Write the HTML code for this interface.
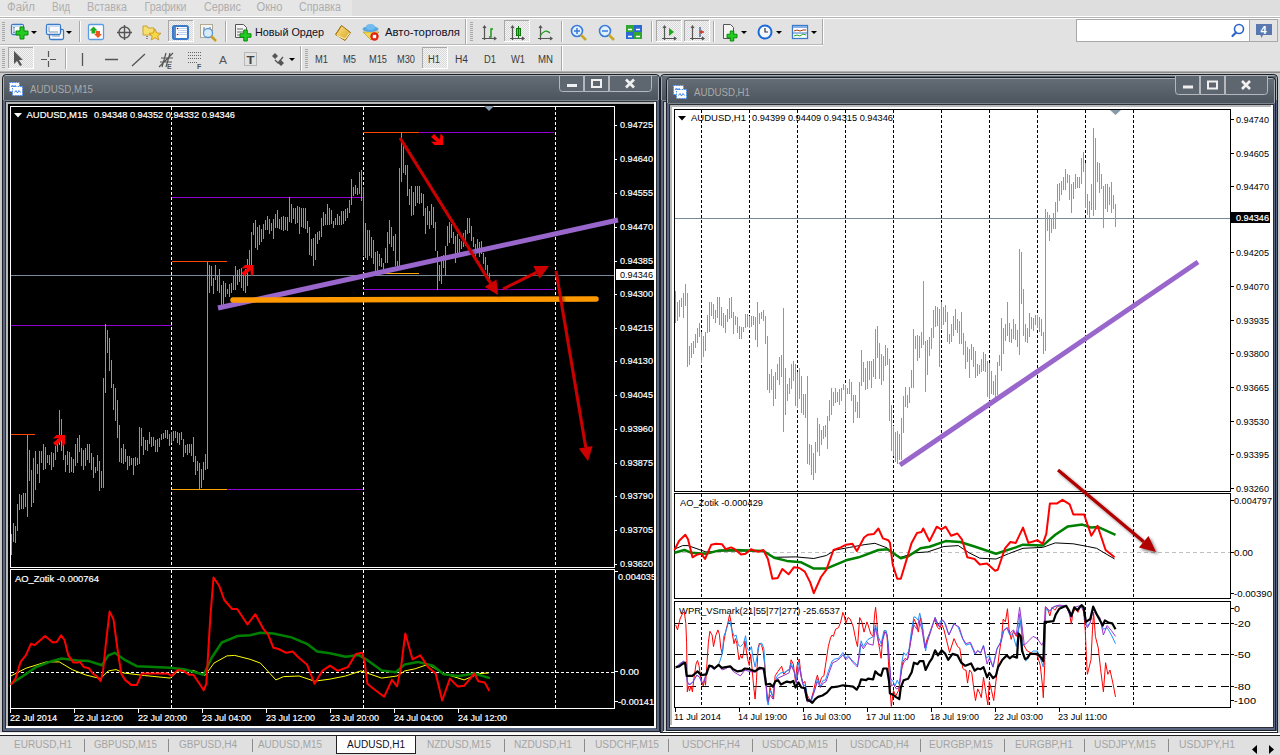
<!DOCTYPE html><html><head><meta charset="utf-8"><style>html,body{margin:0;padding:0;overflow:hidden;background:#e2e2e2} svg{display:block} text{font-family:"Liberation Sans", sans-serif}</style></head><body>
<svg width="1280" height="755" viewBox="0 0 1280 755">
<rect x="0" y="0" width="1280" height="755" fill="#c8c8c8" />
<rect x="0" y="0" width="1280" height="72" fill="#e2e2e2" />
<rect x="0" y="0" width="352" height="16" fill="#e6e6e6" />
<rect x="352" y="0" width="928" height="16" fill="#dedede" />
<text x="7" y="11" fill="#aeaeae" font-size="12" textLength="28" lengthAdjust="spacingAndGlyphs">Файл</text>
<text x="52" y="11" fill="#aeaeae" font-size="12" textLength="18" lengthAdjust="spacingAndGlyphs">Вид</text>
<text x="87" y="11" fill="#aeaeae" font-size="12" textLength="40" lengthAdjust="spacingAndGlyphs">Вставка</text>
<text x="144.5" y="11" fill="#aeaeae" font-size="12" textLength="42" lengthAdjust="spacingAndGlyphs">Графики</text>
<text x="204" y="11" fill="#aeaeae" font-size="12" textLength="37" lengthAdjust="spacingAndGlyphs">Сервис</text>
<text x="256.5" y="11" fill="#aeaeae" font-size="12" textLength="26" lengthAdjust="spacingAndGlyphs">Окно</text>
<text x="299" y="11" fill="#aeaeae" font-size="12" textLength="42" lengthAdjust="spacingAndGlyphs">Справка</text>
<rect x="0" y="16" width="1280" height="1" fill="#ffffff" />
<rect x="0" y="17" width="1280" height="1" fill="#b4b4b4" />
<rect x="0" y="18" width="1280" height="1" fill="#ffffff" />
<rect x="0" y="44" width="1280" height="1" fill="#b9b9b9" />
<rect x="0" y="45" width="1280" height="1" fill="#ffffff" />
<rect x="0" y="71" width="1280" height="1" fill="#b0b0b0" />
<rect x="0" y="72" width="1280" height="1" fill="#8a8a8a" />
<defs><pattern id="chk" width="2" height="2" patternUnits="userSpaceOnUse"><rect width="2" height="2" fill="#f4f4f4"/><rect width="1" height="1" fill="#d8d8d8"/><rect x="1" y="1" width="1" height="1" fill="#d8d8d8"/></pattern></defs>
<rect x="0" y="19" width="823" height="25" fill="#e2e2e2" />
<rect x="822" y="19" width="1" height="26" fill="#a8a8a8" />
<rect x="823" y="19" width="1" height="26" fill="#ffffff" />
<rect x="823" y="44" width="460" height="2" fill="#e2e2e2" />
<rect x="465" y="19" width="1" height="25" fill="#a8a8a8" />
<rect x="466" y="19" width="1" height="25" fill="#ffffff" />
<rect x="561" y="46" width="1" height="25" fill="#a8a8a8" />
<rect x="562" y="46" width="1" height="25" fill="#ffffff" />
<rect x="300" y="46" width="1" height="25" fill="#a8a8a8" />
<rect x="301" y="46" width="1" height="25" fill="#ffffff" />
<rect x="2" y="22" width="3" height="1" fill="#a8a8a8" />
<rect x="2" y="24" width="3" height="1" fill="#a8a8a8" />
<rect x="2" y="26" width="3" height="1" fill="#a8a8a8" />
<rect x="2" y="28" width="3" height="1" fill="#a8a8a8" />
<rect x="2" y="30" width="3" height="1" fill="#a8a8a8" />
<rect x="2" y="32" width="3" height="1" fill="#a8a8a8" />
<rect x="2" y="34" width="3" height="1" fill="#a8a8a8" />
<rect x="2" y="36" width="3" height="1" fill="#a8a8a8" />
<rect x="2" y="38" width="3" height="1" fill="#a8a8a8" />
<rect x="2" y="40" width="3" height="1" fill="#a8a8a8" />
<rect x="11.5" y="24.5" width="12" height="10" rx="1.5" fill="#fafafa" stroke="#3a7ac8" stroke-width="1.3"/>
<rect x="12" y="25" width="11" height="2" fill="#c8dcf4" />
<path d="M14,27 v6 M13,28 l1,-1 l1,1 M13,32 l1,1 l1,-1" stroke="#7a9ac0" stroke-width="1" fill="none"/>
<path d="M20.0,27 h4 v4.0 h4.0 v4 h-4.0 v4.0 h-4 v-4.0 h-4.0 v-4 h4.0 z" fill="#22cc22" stroke="#0a8a0a" stroke-width="1"/>
<polygon points="31,31 37,31 34,34" fill="#000"/>
<rect x="49.5" y="29.5" width="14" height="10" rx="1.5" fill="#fafafa" stroke="#3a7ac8" stroke-width="1.3"/>
<rect x="50" y="30" width="13" height="2" fill="#c8dcf4" />
<rect x="46.5" y="24.5" width="14" height="10" rx="1.5" fill="#fafafa" stroke="#3a7ac8" stroke-width="1.3"/>
<rect x="47" y="25" width="13" height="2" fill="#c8dcf4" />
<path d="M49,32 h9 M49,27 v5 M52,36 h8" stroke="#7a9ac0" stroke-width="1" fill="none"/>
<polygon points="66,31 72,31 69,34" fill="#000"/>
<rect x="79" y="21" width="1" height="21" fill="#a8a8a8" />
<rect x="80" y="21" width="1" height="21" fill="#ffffff" />
<rect x="88.5" y="24.5" width="15" height="15" rx="1.5" fill="#fff" stroke="#5a9ae8" stroke-width="1.3"/>
<path d="M93.5,26.5 l4,4 h-2 v3 h-4 v-3 h-2 z" fill="#22aa22"/><path d="M98,38 l4,-4 h-2 v-3 h-4 v3 h-2 z" fill="#ee5522"/>
<circle cx="124.5" cy="32.5" r="5.5" fill="none" stroke="#555" stroke-width="1.4"/><path d="M124.5,25 v15 M117,32.5 h15" stroke="#555" stroke-width="1.4"/>
<path d="M143,26 h4 l1,2 h6 v7 h-11 z" fill="#f8e070" stroke="#c8a030" stroke-width="1"/><polygon points="155,29 156.8,33 161,33.3 157.8,36 158.8,40 155,37.8 151.2,40 152.2,36 149,33.3 153.2,33" fill="#f8d840" stroke="#c89020" stroke-width="0.8"/><path d="M147,36 v4" stroke="#333" stroke-dasharray="1,1"/>
<rect x="168" y="20" width="26" height="22" fill="url(#chk)"/>
<rect x="168" y="20" width="26" height="1" fill="#a8a8a8" />
<rect x="168" y="20" width="1" height="22" fill="#a8a8a8" />
<rect x="168" y="41" width="26" height="1" fill="#ffffff" />
<rect x="193" y="20" width="1" height="22" fill="#ffffff" />
<rect x="173" y="26" width="15" height="13" rx="1.5" fill="#fff" stroke="#3a7ac8" stroke-width="2"/><rect x="174" y="27" width="2" height="11" fill="#5a8ad0"/><path d="M178,28.5 h9 M178,30.5 h9 M178,32.5 h9 M178,34.5 h9" stroke="#c0d4f0" stroke-width="1"/><circle cx="177.5" cy="28.5" r="0.8" fill="#e00"/><circle cx="177.5" cy="34.5" r="0.8" fill="#e00"/>
<rect x="200.5" y="24.5" width="12" height="13" fill="#f4f4f4" stroke="#b0a890" stroke-width="1"/><path d="M204,27 v8 M210,27 v8" stroke="#777" stroke-width="1"/><circle cx="208" cy="33" r="4.5" fill="#d8ecf8" stroke="#5a9ae0" stroke-width="1.3"/><path d="M211,36 l5,5" stroke="#c8a020" stroke-width="2.5"/>
<rect x="225" y="21" width="1" height="21" fill="#a8a8a8" />
<rect x="226" y="21" width="1" height="21" fill="#ffffff" />
<path d="M235.5,24.5 h8 l3,3 v10 h-11 z" fill="#f4f4f4" stroke="#555" stroke-width="1"/><path d="M237,29 h6 M237,32 h7 M237,35 h5" stroke="#666" stroke-width="1"/>
<path d="M243.75,30 h3.5 v3.75 h3.75 v3.5 h-3.75 v3.75 h-3.5 v-3.75 h-3.75 v-3.5 h3.75 z" fill="#22cc22" stroke="#0a8a0a" stroke-width="1"/>
<text x="255" y="36" fill="#101028" font-size="11" textLength="69" lengthAdjust="spacingAndGlyphs" >Новый Ордер</text>
<defs><linearGradient id="bk" x1="0" y1="0" x2="1" y2="1"><stop offset="0" stop-color="#fbe98a"/><stop offset="1" stop-color="#d8a020"/></linearGradient></defs>
<path d="M335.5,34.5 L341.5,25.5 L350.5,32.5 L345,40.5 Z" fill="url(#bk)" stroke="#9a6a10" stroke-width="1"/><path d="M337,35.5 L345,39 L349.5,33" stroke="#fff4c0" stroke-width="1" fill="none"/><path d="M341.5,25.5 Q339,30 336,34" stroke="#b07818" stroke-width="1" fill="none"/>
<path d="M363,32 l8,8 l8,-8 z" fill="#f0d850" stroke="#c0a030" stroke-width="0.8"/><ellipse cx="370.5" cy="29" rx="8" ry="3" fill="#58a8e0"/><ellipse cx="370.5" cy="27" rx="4.5" ry="3" fill="#70bcf0"/><circle cx="374.5" cy="36.5" r="4.2" fill="#e02010"/><rect x="372.8" y="34.8" width="3.4" height="3.4" fill="#fff"/>
<text x="385" y="36" fill="#101028" font-size="11" textLength="75" lengthAdjust="spacingAndGlyphs" >Авто-торговля</text>
<rect x="470" y="22" width="3" height="1" fill="#a8a8a8" />
<rect x="470" y="24" width="3" height="1" fill="#a8a8a8" />
<rect x="470" y="26" width="3" height="1" fill="#a8a8a8" />
<rect x="470" y="28" width="3" height="1" fill="#a8a8a8" />
<rect x="470" y="30" width="3" height="1" fill="#a8a8a8" />
<rect x="470" y="32" width="3" height="1" fill="#a8a8a8" />
<rect x="470" y="34" width="3" height="1" fill="#a8a8a8" />
<rect x="470" y="36" width="3" height="1" fill="#a8a8a8" />
<rect x="470" y="38" width="3" height="1" fill="#a8a8a8" />
<rect x="470" y="40" width="3" height="1" fill="#a8a8a8" />
<path d="M484.5,26 v14 M482,38.5 h14 M483,28 l1.5,-2 l1.5,2 M494,37 l2,1.5 l-2,1.5" stroke="#555" stroke-width="1.2" fill="none"/>
<path d="M489,37 h2 v-8 h2" stroke="#1a9a1a" stroke-width="1.5" fill="none"/>
<rect x="504" y="20" width="26" height="22" fill="url(#chk)"/>
<rect x="504" y="20" width="26" height="1" fill="#a8a8a8" />
<rect x="504" y="20" width="1" height="22" fill="#a8a8a8" />
<rect x="504" y="41" width="26" height="1" fill="#ffffff" />
<rect x="529" y="20" width="1" height="22" fill="#ffffff" />
<path d="M512.5,26 v14 M510,38.5 h14 M511,28 l1.5,-2 l1.5,2 M522,37 l2,1.5 l-2,1.5" stroke="#555" stroke-width="1.2" fill="none"/>
<rect x="516.5" y="28.5" width="4" height="7" fill="#30e030" stroke="#0a7a0a"/><path d="M518.5,26 v12" stroke="#0a7a0a"/>
<path d="M540.5,26 v14 M538,38.5 h14 M539,28 l1.5,-2 l1.5,2 M550,37 l2,1.5 l-2,1.5" stroke="#555" stroke-width="1.2" fill="none"/>
<path d="M540,36 q5,-8 10,-3" stroke="#1a9a1a" stroke-width="1.3" fill="none"/>
<rect x="561" y="21" width="1" height="21" fill="#a8a8a8" />
<rect x="562" y="21" width="1" height="21" fill="#ffffff" />
<circle cx="577" cy="31" r="5.5" fill="#e0f0fc" stroke="#3a7ad8" stroke-width="1.6"/><path d="M574,31 h6 M577,28 v6" stroke="#3a7ad8" stroke-width="1.5"/><path d="M581,35 l5,5" stroke="#c8a820" stroke-width="2.5"/>
<circle cx="605" cy="31" r="5.5" fill="#e0f0fc" stroke="#3a7ad8" stroke-width="1.6"/><path d="M602,31 h6" stroke="#3a7ad8" stroke-width="1.5"/><path d="M609,35 l5,5" stroke="#c8a820" stroke-width="2.5"/>
<rect x="626" y="25" width="8" height="7" fill="#30a830"/><rect x="634" y="25" width="8" height="7" fill="#2a6ad0"/><rect x="626" y="32" width="8" height="7" fill="#2a6ad0"/><rect x="634" y="32" width="8" height="7" fill="#30a830"/><path d="M628,29.5 h4 M636,29.5 h4 M628,36.5 h4 M636,36.5 h4" stroke="#fff" stroke-width="1.5"/>
<rect x="651" y="21" width="1" height="21" fill="#a8a8a8" />
<rect x="652" y="21" width="1" height="21" fill="#ffffff" />
<rect x="656" y="20" width="26" height="22" fill="url(#chk)"/>
<rect x="656" y="20" width="26" height="1" fill="#a8a8a8" />
<rect x="656" y="20" width="1" height="22" fill="#a8a8a8" />
<rect x="656" y="41" width="26" height="1" fill="#ffffff" />
<rect x="681" y="20" width="1" height="22" fill="#ffffff" />
<path d="M664.5,26 v14 M662,38.5 h14 M663,28 l1.5,-2 l1.5,2 M674,37 l2,1.5 l-2,1.5" stroke="#555" stroke-width="1.2" fill="none"/>
<polygon points="669,28 674,32 669,36" fill="#1aaa1a"/>
<rect x="684" y="20" width="26" height="22" fill="url(#chk)"/>
<rect x="684" y="20" width="26" height="1" fill="#a8a8a8" />
<rect x="684" y="20" width="1" height="22" fill="#a8a8a8" />
<rect x="684" y="41" width="26" height="1" fill="#ffffff" />
<rect x="709" y="20" width="1" height="22" fill="#ffffff" />
<path d="M692.5,26 v14 M690,38.5 h14 M691,28 l1.5,-2 l1.5,2 M702,37 l2,1.5 l-2,1.5" stroke="#555" stroke-width="1.2" fill="none"/>
<path d="M700,27 v10" stroke="#2a4a9a" stroke-width="1.2"/><path d="M704,32 h-3 M702,30.5 l-1.5,1.5 l1.5,1.5" stroke="#dd3311" stroke-width="1.3" fill="none"/>
<rect x="713" y="21" width="1" height="21" fill="#a8a8a8" />
<rect x="714" y="21" width="1" height="21" fill="#ffffff" />
<path d="M723.5,24.5 h7 l3,3 v11 h-10 z" fill="#f4f4f4" stroke="#555"/>
<path d="M730.25,31 h3.5 v3.25 h3.25 v3.5 h-3.25 v3.25 h-3.5 v-3.25 h-3.25 v-3.5 h3.25 z" fill="#22cc22" stroke="#0a8a0a" stroke-width="1"/>
<polygon points="741,31 747,31 744,34" fill="#000"/>
<circle cx="765" cy="32" r="7.5" fill="#1a6ad8"/><circle cx="765" cy="32" r="5.5" fill="#f4f8fc"/><path d="M765,28 v4 h3" stroke="#333" stroke-width="1.2" fill="none"/>
<polygon points="776,31 782,31 779,34" fill="#000"/>
<rect x="792.5" y="25.5" width="15" height="13" fill="#fff" stroke="#3a7ac8" stroke-width="1.3"/><rect x="793" y="26" width="14" height="2" fill="#88b0e8"/><path d="M794,31 l3,-1 l3,1 l3,-1 l3,0" stroke="#aa3311" fill="none"/><path d="M794,36 l3,-1 l3,1 l3,-2 l3,1" stroke="#22aa22" fill="none"/><path d="M793,33 h14" stroke="#3a7ac8"/>
<polygon points="811,31 817,31 814,34" fill="#000"/>
<rect x="1076.5" y="19.5" width="173" height="22" fill="#fff" stroke="#a8a8a8"/>
<circle cx="1239" cy="29" r="4.5" fill="none" stroke="#2a64c8" stroke-width="1.6"/><path d="M1236,32.5 l-3.5,3.5" stroke="#2a64c8" stroke-width="2.2" stroke-linecap="round"/>
<rect x="1249.5" y="19.5" width="28" height="22" fill="#e4e4e4" stroke="#a8a8a8"/>
<path d="M1256,24 h16 v11 h-9 l-1.5,3 l-1,-3 h-4.5 z" fill="#5a78b0"/>
<text x="1260.5" y="34" fill="#ffffff" font-size="11" font-weight="bold">4</text>
<rect x="2" y="49" width="3" height="1" fill="#a8a8a8" />
<rect x="2" y="51" width="3" height="1" fill="#a8a8a8" />
<rect x="2" y="53" width="3" height="1" fill="#a8a8a8" />
<rect x="2" y="55" width="3" height="1" fill="#a8a8a8" />
<rect x="2" y="57" width="3" height="1" fill="#a8a8a8" />
<rect x="2" y="59" width="3" height="1" fill="#a8a8a8" />
<rect x="2" y="61" width="3" height="1" fill="#a8a8a8" />
<rect x="2" y="63" width="3" height="1" fill="#a8a8a8" />
<rect x="2" y="65" width="3" height="1" fill="#a8a8a8" />
<rect x="2" y="67" width="3" height="1" fill="#a8a8a8" />
<rect x="8" y="47" width="26" height="22" fill="url(#chk)"/>
<rect x="8" y="47" width="26" height="1" fill="#a8a8a8" />
<rect x="8" y="47" width="1" height="22" fill="#a8a8a8" />
<rect x="8" y="68" width="26" height="1" fill="#ffffff" />
<rect x="33" y="47" width="1" height="22" fill="#ffffff" />
<path d="M14,51 v13 l3,-3 l3,5 l2,-1 l-3,-5 h4 z" fill="#555"/>
<path d="M41,59.5 h6 M50,59.5 h6 M48.5,51 v6 M48.5,61 v6" stroke="#555" stroke-width="1.2"/>
<rect x="65" y="48" width="1" height="21" fill="#a8a8a8" />
<rect x="66" y="48" width="1" height="21" fill="#ffffff" />
<path d="M82.5,53 v13 M105,59.5 h13 M132,66 l13,-12" stroke="#555" stroke-width="1.3"/>
<path d="M159,67 l14,-14 M160,62 h12 M161,58 h12 M166,53 l-4,14 M170,53 l-4,14" stroke="#555" stroke-width="1.2"/>
<text x="167" y="69" fill="#555" font-size="7" font-weight="bold">E</text>
<path d="M188,52.5 h13 M188,55.5 h13 M188,58.5 h13 M188,62.5 h10" stroke="#666" stroke-width="1" stroke-dasharray="1,1"/>
<text x="197" y="69" fill="#555" font-size="7" font-weight="bold">F</text>
<text x="219" y="64" fill="#555" font-size="11" textLength="8" lengthAdjust="spacingAndGlyphs" >A</text>
<rect x="244.5" y="52.5" width="12" height="13" fill="none" stroke="#777" stroke-width="0.8" stroke-dasharray="1,1"/>
<text x="246.5" y="64" fill="#444" font-size="11" textLength="8" lengthAdjust="spacingAndGlyphs" font-weight="bold">T</text>
<path d="M272,56 l3,-3 l3,3 l-3,3 z M278,63 l3,-3 l3,3 l-3,3 z" fill="#555"/><path d="M275,60 l3,3 l5,-6" stroke="#555" stroke-width="1.3" fill="none"/>
<polygon points="289,58 295,58 292,61" fill="#000"/>
<rect x="305" y="49" width="3" height="1" fill="#a8a8a8" />
<rect x="305" y="51" width="3" height="1" fill="#a8a8a8" />
<rect x="305" y="53" width="3" height="1" fill="#a8a8a8" />
<rect x="305" y="55" width="3" height="1" fill="#a8a8a8" />
<rect x="305" y="57" width="3" height="1" fill="#a8a8a8" />
<rect x="305" y="59" width="3" height="1" fill="#a8a8a8" />
<rect x="305" y="61" width="3" height="1" fill="#a8a8a8" />
<rect x="305" y="63" width="3" height="1" fill="#a8a8a8" />
<rect x="305" y="65" width="3" height="1" fill="#a8a8a8" />
<rect x="305" y="67" width="3" height="1" fill="#a8a8a8" />
<text x="315" y="63" fill="#3a3a3a" font-size="10" textLength="13" lengthAdjust="spacingAndGlyphs" >M1</text>
<text x="343" y="63" fill="#3a3a3a" font-size="10" textLength="13" lengthAdjust="spacingAndGlyphs" >M5</text>
<text x="369" y="63" fill="#3a3a3a" font-size="10" textLength="18" lengthAdjust="spacingAndGlyphs" >M15</text>
<text x="397" y="63" fill="#3a3a3a" font-size="10" textLength="18" lengthAdjust="spacingAndGlyphs" >M30</text>
<rect x="422" y="47" width="26" height="22" fill="url(#chk)"/>
<rect x="422" y="47" width="26" height="1" fill="#a8a8a8" />
<rect x="422" y="47" width="1" height="22" fill="#a8a8a8" />
<rect x="422" y="68" width="26" height="1" fill="#ffffff" />
<rect x="447" y="47" width="1" height="22" fill="#ffffff" />
<text x="428" y="63" fill="#3a3a3a" font-size="10" textLength="12" lengthAdjust="spacingAndGlyphs" >H1</text>
<text x="455" y="63" fill="#3a3a3a" font-size="10" textLength="13" lengthAdjust="spacingAndGlyphs" >H4</text>
<text x="484" y="63" fill="#3a3a3a" font-size="10" textLength="12" lengthAdjust="spacingAndGlyphs" >D1</text>
<text x="511" y="63" fill="#3a3a3a" font-size="10" textLength="14" lengthAdjust="spacingAndGlyphs" >W1</text>
<text x="538" y="63" fill="#3a3a3a" font-size="10" textLength="15" lengthAdjust="spacingAndGlyphs" >MN</text>
<defs><linearGradient id="tg" x1="0" y1="0" x2="0" y2="1"><stop offset="0" stop-color="#646c76"/><stop offset="1" stop-color="#4c545e"/></linearGradient><filter id="sh" x="-20%" y="-20%" width="140%" height="140%"><feGaussianBlur in="SourceAlpha" stdDeviation="1.5"/><feOffset dx="2" dy="2"/><feComponentTransfer><feFuncA type="linear" slope="0.5"/></feComponentTransfer><feMerge><feMergeNode/><feMergeNode in="SourceGraphic"/></feMerge></filter></defs>
<path d="M2,732 V79 Q2,74 7,74 H655 Q660,74 660,79 V732 Z" fill="#1c2026"/>
<path d="M3,731 V79 Q3,75 7,75 H655 Q659,75 659,79 V731 Z" fill="#5a6580"/>
<path d="M3,100 V79 Q3,75 7,75 H655 Q659,75 659,79 V100 H658 V79 Q658,76 655,76 H7 Q4,76 4,79 V100 Z" fill="#a4acb4"/>
<path d="M4,731 V79 Q4,76 7,76 H655 Q658,76 658,79 V731 Z" fill="#5a6580"/>
<rect x="4" y="76" width="654" height="24" fill="url(#tg)"/>
<rect x="4" y="100" width="654" height="1" fill="#7c848e" />
<rect x="5" y="101" width="652" height="1" fill="#2a2e36" />
<rect x="5" y="101" width="1" height="628" fill="#2a2e36" />
<rect x="6" y="102" width="648" height="2" fill="#b8b8b8" />
<rect x="6" y="102" width="2" height="624" fill="#b8b8b8" />
<rect x="654" y="102" width="2" height="626" fill="#ffffff" />
<rect x="6" y="726" width="650" height="2" fill="#ffffff" />
<rect x="656" y="101" width="1" height="628" fill="#2a2e36" />
<g transform="translate(9,82)"><rect x="0.5" y="0.5" width="10" height="9" fill="#fff" stroke="#4a90f0" stroke-width="1" stroke-dasharray="1.5,1"/><rect x="3.5" y="4.5" width="10" height="9" fill="#fff" stroke="#4a90f0" stroke-width="1" stroke-dasharray="1.5,1"/><polyline points="5.5,10.5 7,8.5 8.5,11 10,8.5 11.5,10.5" fill="none" stroke="#3a86f0" stroke-width="1"/><polyline points="2,5 3.5,3 5,5 6.5,3" fill="none" stroke="#3a86f0" stroke-width="1"/></g>
<text x="30" y="93" fill="#aaaaa6" font-size="11" textLength="63" lengthAdjust="spacingAndGlyphs">AUDUSD,M15</text>
<path d="M559.5,75.5 H583.5 V91.5 H562.5 Q559.5,91.5 559.5,88.5 Z" fill="#5e6670" stroke="#b4b8bc" stroke-width="1"/>
<rect x="584.5" y="75.5" width="24" height="16" fill="#5e6670" stroke="#b4b8bc" stroke-width="1"/>
<path d="M609.5,75.5 H651.5 V88.5 Q651.5,91.5 648.5,91.5 H609.5 Z" fill="#5e6670" stroke="#b4b8bc" stroke-width="1"/>
<rect x="567" y="84.0" width="10" height="3" fill="#f0f0f0" />
<rect x="592" y="80.0" width="9" height="7" fill="none" stroke="#f0f0f0" stroke-width="2"/>
<path d="M626,79.5 L634,87.5 M634,79.5 L626,87.5" stroke="#f0f0f0" stroke-width="2.6"/>
<path d="M660,733 V79 Q660,74 665,74 H1273 Q1278,74 1278,79 V733 Z" fill="#1c2026"/>
<path d="M661,732 V79 Q661,75 665,75 H1273 Q1277,75 1277,79 V732 Z" fill="#5a6580"/>
<path d="M661,100 V79 Q661,75 665,75 H1273 Q1277,75 1277,79 V100 H1276 V79 Q1276,76 1273,76 H665 Q662,76 662,79 V100 Z" fill="#a4acb4"/>
<path d="M662,732 V79 Q662,76 665,76 H1273 Q1276,76 1276,79 V732 Z" fill="#5a6580"/>
<rect x="662" y="76" width="614" height="24" fill="url(#tg)"/>
<rect x="662" y="100" width="614" height="1" fill="#7c848e" />
<rect x="663" y="101" width="613" height="1" fill="#2a2e36" />
<rect x="663" y="101" width="1" height="630" fill="#2a2e36" />
<rect x="664" y="102" width="2" height="629" fill="#c8c8c8" />
<rect x="663" y="731" width="614" height="1" fill="#ffffff" />
<rect x="660" y="732" width="617" height="1" fill="#1c2026" />
<path d="M666,731 V82 Q666,77 671,77 H1271 Q1276,77 1276,82 V731 Z" fill="#1c2026"/>
<path d="M667,730 V82 Q667,78 671,78 H1271 Q1275,78 1275,82 V730 Z" fill="#5a6580"/>
<path d="M667,103 V82 Q667,78 671,78 H1271 Q1275,78 1275,82 V103 H1274 V82 Q1274,79 1271,79 H671 Q668,79 668,82 V103 Z" fill="#a4acb4"/>
<path d="M668,730 V82 Q668,79 671,79 H1271 Q1274,79 1274,82 V730 Z" fill="#5a6580"/>
<rect x="668" y="79" width="606" height="24" fill="url(#tg)"/>
<rect x="668" y="103" width="606" height="1" fill="#7c848e" />
<rect x="669" y="104" width="604" height="1" fill="#2a2e36" />
<rect x="669" y="104" width="1" height="623" fill="#2a2e36" />
<rect x="670" y="105" width="602" height="2" fill="#b8b8b8" />
<rect x="670" y="105" width="2" height="622" fill="#b8b8b8" />
<rect x="1271" y="105" width="2" height="622" fill="#ffffff" />
<rect x="670" y="725" width="603" height="2" fill="#ffffff" />
<rect x="1273" y="104" width="1" height="624" fill="#2a2e36" />
<rect x="669" y="727" width="605" height="1" fill="#2a2e36" />
<g transform="translate(673,85)"><rect x="0.5" y="0.5" width="10" height="9" fill="#fff" stroke="#4a90f0" stroke-width="1" stroke-dasharray="1.5,1"/><rect x="3.5" y="4.5" width="10" height="9" fill="#fff" stroke="#4a90f0" stroke-width="1" stroke-dasharray="1.5,1"/><polyline points="5.5,10.5 7,8.5 8.5,11 10,8.5 11.5,10.5" fill="none" stroke="#3a86f0" stroke-width="1"/><polyline points="2,5 3.5,3 5,5 6.5,3" fill="none" stroke="#3a86f0" stroke-width="1"/></g>
<text x="694" y="96" fill="#aaaaa6" font-size="11" textLength="56" lengthAdjust="spacingAndGlyphs">AUDUSD,H1</text>
<path d="M1175.5,75.5 H1199.5 V94.5 H1178.5 Q1175.5,94.5 1175.5,91.5 Z" fill="#5e6670" stroke="#b4b8bc" stroke-width="1"/>
<rect x="1200.5" y="75.5" width="24" height="19" fill="#5e6670" stroke="#b4b8bc" stroke-width="1"/>
<path d="M1225.5,75.5 H1267.5 V91.5 Q1267.5,94.5 1264.5,94.5 H1225.5 Z" fill="#5e6670" stroke="#b4b8bc" stroke-width="1"/>
<rect x="1183" y="85.5" width="10" height="3" fill="#f0f0f0" />
<rect x="1208" y="81.5" width="9" height="7" fill="none" stroke="#f0f0f0" stroke-width="2"/>
<path d="M1242,81.0 L1250,89.0 M1250,81.0 L1242,89.0" stroke="#f0f0f0" stroke-width="2.6"/>
<rect x="0" y="732" width="660" height="1" fill="#e8e8e8" />
<rect x="0" y="733" width="1280" height="1" fill="#ffffff" />
<rect x="0" y="734" width="1280" height="1" fill="#ffffff" />
<rect x="0" y="735" width="1280" height="1" fill="#202020" />
<rect x="0" y="736" width="1280" height="19" fill="#e0e0e0" />
<rect x="84" y="739" width="1" height="13" fill="#8c8c8c"/>
<rect x="168" y="739" width="1" height="13" fill="#8c8c8c"/>
<rect x="252" y="739" width="1" height="13" fill="#8c8c8c"/>
<rect x="504" y="739" width="1" height="13" fill="#8c8c8c"/>
<rect x="584" y="739" width="1" height="13" fill="#8c8c8c"/>
<rect x="668" y="739" width="1" height="13" fill="#8c8c8c"/>
<rect x="752" y="739" width="1" height="13" fill="#8c8c8c"/>
<rect x="836" y="739" width="1" height="13" fill="#8c8c8c"/>
<rect x="920" y="739" width="1" height="13" fill="#8c8c8c"/>
<rect x="1004" y="739" width="1" height="13" fill="#8c8c8c"/>
<rect x="1084" y="739" width="1" height="13" fill="#8c8c8c"/>
<rect x="1168" y="739" width="1" height="13" fill="#8c8c8c"/>
<rect x="336.5" y="735.5" width="79" height="18" fill="#ffffff" stroke="#202020" stroke-width="1"/>
<text x="14" y="748" fill="#a4a4a4" font-size="10" textLength="58" lengthAdjust="spacingAndGlyphs">EURUSD,H1</text>
<text x="94" y="748" fill="#a4a4a4" font-size="10" textLength="63" lengthAdjust="spacingAndGlyphs">GBPUSD,M15</text>
<text x="179" y="748" fill="#a4a4a4" font-size="10" textLength="58" lengthAdjust="spacingAndGlyphs">GBPUSD,H4</text>
<text x="258" y="748" fill="#a4a4a4" font-size="10" textLength="64" lengthAdjust="spacingAndGlyphs">AUDUSD,M15</text>
<text x="347" y="748" fill="#101028" font-size="10" textLength="58" lengthAdjust="spacingAndGlyphs">AUDUSD,H1</text>
<text x="427" y="748" fill="#a4a4a4" font-size="10" textLength="64" lengthAdjust="spacingAndGlyphs">NZDUSD,M15</text>
<text x="514" y="748" fill="#a4a4a4" font-size="10" textLength="58" lengthAdjust="spacingAndGlyphs">NZDUSD,H1</text>
<text x="595" y="748" fill="#a4a4a4" font-size="10" textLength="64" lengthAdjust="spacingAndGlyphs">USDCHF,M15</text>
<text x="682" y="748" fill="#a4a4a4" font-size="10" textLength="58" lengthAdjust="spacingAndGlyphs">USDCHF,H4</text>
<text x="762" y="748" fill="#a4a4a4" font-size="10" textLength="66" lengthAdjust="spacingAndGlyphs">USDCAD,M15</text>
<text x="850" y="748" fill="#a4a4a4" font-size="10" textLength="59" lengthAdjust="spacingAndGlyphs">USDCAD,H4</text>
<text x="929" y="748" fill="#a4a4a4" font-size="10" textLength="64" lengthAdjust="spacingAndGlyphs">EURGBP,M15</text>
<text x="1015" y="748" fill="#a4a4a4" font-size="10" textLength="58" lengthAdjust="spacingAndGlyphs">EURGBP,H1</text>
<text x="1094" y="748" fill="#a4a4a4" font-size="10" textLength="62" lengthAdjust="spacingAndGlyphs">USDJPY,M15</text>
<text x="1179" y="748" fill="#a4a4a4" font-size="10" textLength="56" lengthAdjust="spacingAndGlyphs">USDJPY,H1</text>
<polygon points="1257,745 1252,749.5 1257,754" fill="#000"/><polygon points="1269,745 1274,749.5 1269,754" fill="#000"/>
<rect x="8" y="104" width="646" height="622" fill="#000000" />
<rect x="10" y="106" width="605" height="1" fill="#ffffff" />
<rect x="10" y="106" width="1" height="462" fill="#ffffff" />
<rect x="614" y="106" width="1" height="462" fill="#ffffff" />
<rect x="10" y="567" width="605" height="1" fill="#ffffff" />
<rect x="10" y="569" width="605" height="1" fill="#ffffff" />
<rect x="10" y="569" width="1" height="140" fill="#ffffff" />
<rect x="614" y="569" width="1" height="140" fill="#ffffff" />
<rect x="10" y="708" width="605" height="1" fill="#ffffff" />
<line x1="171.5" y1="107" x2="171.5" y2="567" stroke="#ffffff" stroke-width="1" stroke-dasharray="3,2" shape-rendering="crispEdges"/>
<line x1="171.5" y1="570" x2="171.5" y2="708" stroke="#ffffff" stroke-width="1" stroke-dasharray="3,2" shape-rendering="crispEdges"/>
<line x1="363.5" y1="107" x2="363.5" y2="567" stroke="#ffffff" stroke-width="1" stroke-dasharray="3,2" shape-rendering="crispEdges"/>
<line x1="363.5" y1="570" x2="363.5" y2="708" stroke="#ffffff" stroke-width="1" stroke-dasharray="3,2" shape-rendering="crispEdges"/>
<line x1="555.5" y1="107" x2="555.5" y2="567" stroke="#ffffff" stroke-width="1" stroke-dasharray="3,2" shape-rendering="crispEdges"/>
<line x1="555.5" y1="570" x2="555.5" y2="708" stroke="#ffffff" stroke-width="1" stroke-dasharray="3,2" shape-rendering="crispEdges"/>
<rect x="615" y="125" width="2" height="1" fill="#ffffff" />
<text x="620" y="128" fill="#ffffff" stroke="#ffffff" stroke-width="0.2" font-size="9.5" textLength="33" lengthAdjust="spacingAndGlyphs" >0.94725</text>
<rect x="615" y="159" width="2" height="1" fill="#ffffff" />
<text x="620" y="162" fill="#ffffff" stroke="#ffffff" stroke-width="0.2" font-size="9.5" textLength="33" lengthAdjust="spacingAndGlyphs" >0.94640</text>
<rect x="615" y="193" width="2" height="1" fill="#ffffff" />
<text x="620" y="196" fill="#ffffff" stroke="#ffffff" stroke-width="0.2" font-size="9.5" textLength="33" lengthAdjust="spacingAndGlyphs" >0.94555</text>
<rect x="615" y="227" width="2" height="1" fill="#ffffff" />
<text x="620" y="230" fill="#ffffff" stroke="#ffffff" stroke-width="0.2" font-size="9.5" textLength="33" lengthAdjust="spacingAndGlyphs" >0.94470</text>
<rect x="615" y="261" width="2" height="1" fill="#ffffff" />
<text x="620" y="264" fill="#ffffff" stroke="#ffffff" stroke-width="0.2" font-size="9.5" textLength="33" lengthAdjust="spacingAndGlyphs" >0.94385</text>
<rect x="615" y="294" width="2" height="1" fill="#ffffff" />
<text x="620" y="297" fill="#ffffff" stroke="#ffffff" stroke-width="0.2" font-size="9.5" textLength="33" lengthAdjust="spacingAndGlyphs" >0.94300</text>
<rect x="615" y="328" width="2" height="1" fill="#ffffff" />
<text x="620" y="331" fill="#ffffff" stroke="#ffffff" stroke-width="0.2" font-size="9.5" textLength="33" lengthAdjust="spacingAndGlyphs" >0.94215</text>
<rect x="615" y="361" width="2" height="1" fill="#ffffff" />
<text x="620" y="364" fill="#ffffff" stroke="#ffffff" stroke-width="0.2" font-size="9.5" textLength="33" lengthAdjust="spacingAndGlyphs" >0.94130</text>
<rect x="615" y="395" width="2" height="1" fill="#ffffff" />
<text x="620" y="398" fill="#ffffff" stroke="#ffffff" stroke-width="0.2" font-size="9.5" textLength="33" lengthAdjust="spacingAndGlyphs" >0.94045</text>
<rect x="615" y="429" width="2" height="1" fill="#ffffff" />
<text x="620" y="432" fill="#ffffff" stroke="#ffffff" stroke-width="0.2" font-size="9.5" textLength="33" lengthAdjust="spacingAndGlyphs" >0.93960</text>
<rect x="615" y="463" width="2" height="1" fill="#ffffff" />
<text x="620" y="466" fill="#ffffff" stroke="#ffffff" stroke-width="0.2" font-size="9.5" textLength="33" lengthAdjust="spacingAndGlyphs" >0.93875</text>
<rect x="615" y="496" width="2" height="1" fill="#ffffff" />
<text x="620" y="499" fill="#ffffff" stroke="#ffffff" stroke-width="0.2" font-size="9.5" textLength="33" lengthAdjust="spacingAndGlyphs" >0.93790</text>
<rect x="615" y="530" width="2" height="1" fill="#ffffff" />
<text x="620" y="533" fill="#ffffff" stroke="#ffffff" stroke-width="0.2" font-size="9.5" textLength="33" lengthAdjust="spacingAndGlyphs" >0.93705</text>
<rect x="615" y="564" width="2" height="1" fill="#ffffff" />
<text x="620" y="567" fill="#ffffff" stroke="#ffffff" stroke-width="0.2" font-size="9.5" textLength="33" lengthAdjust="spacingAndGlyphs" >0.93620</text>
<rect x="616" y="269" width="38" height="11" fill="#ffffff" />
<text x="620" y="278" fill="#000000" font-size="9.5" textLength="33" lengthAdjust="spacingAndGlyphs" >0.94346</text>
<rect x="10" y="709" width="1" height="4" fill="#ffffff" />
<text x="10" y="721" fill="#ffffff" stroke="#ffffff" stroke-width="0.2" font-size="9.5" textLength="47" lengthAdjust="spacingAndGlyphs" >22 Jul 2014</text>
<rect x="74" y="709" width="1" height="4" fill="#ffffff" />
<text x="74" y="721" fill="#ffffff" stroke="#ffffff" stroke-width="0.2" font-size="9.5" textLength="49" lengthAdjust="spacingAndGlyphs" >22 Jul 12:00</text>
<rect x="138" y="709" width="1" height="4" fill="#ffffff" />
<text x="138" y="721" fill="#ffffff" stroke="#ffffff" stroke-width="0.2" font-size="9.5" textLength="49" lengthAdjust="spacingAndGlyphs" >22 Jul 20:00</text>
<rect x="202" y="709" width="1" height="4" fill="#ffffff" />
<text x="202" y="721" fill="#ffffff" stroke="#ffffff" stroke-width="0.2" font-size="9.5" textLength="49" lengthAdjust="spacingAndGlyphs" >23 Jul 04:00</text>
<rect x="266" y="709" width="1" height="4" fill="#ffffff" />
<text x="266" y="721" fill="#ffffff" stroke="#ffffff" stroke-width="0.2" font-size="9.5" textLength="49" lengthAdjust="spacingAndGlyphs" >23 Jul 12:00</text>
<rect x="330" y="709" width="1" height="4" fill="#ffffff" />
<text x="330" y="721" fill="#ffffff" stroke="#ffffff" stroke-width="0.2" font-size="9.5" textLength="49" lengthAdjust="spacingAndGlyphs" >23 Jul 20:00</text>
<rect x="394" y="709" width="1" height="4" fill="#ffffff" />
<text x="394" y="721" fill="#ffffff" stroke="#ffffff" stroke-width="0.2" font-size="9.5" textLength="49" lengthAdjust="spacingAndGlyphs" >24 Jul 04:00</text>
<rect x="458" y="709" width="1" height="4" fill="#ffffff" />
<text x="458" y="721" fill="#ffffff" stroke="#ffffff" stroke-width="0.2" font-size="9.5" textLength="49" lengthAdjust="spacingAndGlyphs" >24 Jul 12:00</text>
<text x="15" y="582" fill="#ffffff" stroke="#ffffff" stroke-width="0.2" font-size="9.5" textLength="84" lengthAdjust="spacingAndGlyphs" >AO_Zotik -0.000764</text>
<rect x="615" y="571" width="3" height="1" fill="#ffffff" />
<text x="618" y="580" fill="#ffffff" stroke="#ffffff" stroke-width="0.2" font-size="9.5" textLength="38" lengthAdjust="spacingAndGlyphs" >0.004035</text>
<rect x="615" y="671" width="3" height="1" fill="#ffffff" />
<text x="620" y="675" fill="#ffffff" stroke="#ffffff" stroke-width="0.2" font-size="9.5" textLength="19" lengthAdjust="spacingAndGlyphs" >0.00</text>
<rect x="615" y="701" width="3" height="1" fill="#ffffff" />
<text x="618" y="705" fill="#ffffff" stroke="#ffffff" stroke-width="0.2" font-size="9.5" textLength="36" lengthAdjust="spacingAndGlyphs" >-0.00141</text>
<line x1="11" y1="672.5" x2="614" y2="672.5" stroke="#ffffff" stroke-width="1" stroke-dasharray="3,2" shape-rendering="crispEdges"/>
<rect x="11" y="325" width="161" height="1" fill="#9400d3" />
<rect x="172" y="197" width="191" height="1" fill="#9400d3" />
<rect x="363" y="132" width="56" height="1" fill="#ff4500" />
<rect x="419" y="132" width="135" height="1" fill="#9400d3" />
<rect x="11" y="434" width="24" height="1" fill="#ff4500" />
<rect x="172" y="261" width="55" height="1" fill="#ff4500" />
<rect x="172" y="489" width="55" height="1" fill="#ffa500" />
<rect x="227" y="489" width="136" height="1" fill="#9400d3" />
<rect x="363" y="289" width="191" height="1" fill="#9400d3" />
<rect x="363" y="273" width="56" height="1" fill="#ffa500" />
<rect x="11" y="275" width="603" height="1" fill="#778899" />
<path d="M11.5,534V555M13.5,523V542M15.5,526V543M17.5,504V531M19.5,494V510M21.5,495V509M23.5,493V509M25.5,493V507M27.5,435V517M29.5,450V481M31.5,470V507M33.5,458V503M35.5,451V490M37.5,464V474M39.5,451V483M41.5,451V463M43.5,444V470M45.5,447V469M47.5,455V463M49.5,455V465M51.5,452V470M53.5,453V467M55.5,446V460M57.5,439V452M59.5,410V445M61.5,419V451M63.5,444V460M65.5,455V472M67.5,451V465M69.5,452V473M71.5,457V472M73.5,459V473M75.5,444V466M77.5,438V463M79.5,435V452M81.5,448V466M83.5,450V470M85.5,448V466M87.5,444V460M89.5,444V463M91.5,453V470M93.5,457V478M95.5,467V473M97.5,455V471M99.5,461V491M101.5,471V488M103.5,378V488M105.5,324V393M107.5,330V353M109.5,338V371M111.5,360V388M113.5,384V410M115.5,388V421M117.5,400V438M119.5,425V462M121.5,448V463M123.5,444V464M125.5,449V462M127.5,456V470M129.5,456V466M131.5,458V465M133.5,458V475M135.5,457V466M137.5,458V465M139.5,427V464M141.5,428V446M143.5,437V455M145.5,440V450M147.5,440V451M149.5,432V444M151.5,437V447M153.5,437V446M155.5,440V452M157.5,439V452M159.5,438V447M161.5,434V440M163.5,433V439M165.5,430V438M167.5,430V439M169.5,434V446M171.5,432V443M173.5,431V441M175.5,431V438M177.5,432V443M179.5,433V445M181.5,432V440M183.5,439V457M185.5,445V453M187.5,444V455M189.5,444V453M191.5,444V456M193.5,437V462M195.5,456V475M197.5,461V471M199.5,463V489M201.5,469V488M203.5,462V480M205.5,454V470M207.5,262V469M209.5,265V293M211.5,266V286M213.5,278V294M215.5,265V280M217.5,276V291M219.5,269V293M221.5,285V305M223.5,281V305M225.5,283V297M227.5,289V294M229.5,284V297M231.5,283V293M233.5,276V290M235.5,266V290M237.5,270V285M239.5,269V282M241.5,268V288M243.5,272V291M245.5,269V293M247.5,259V286M249.5,250V265M251.5,232V265M253.5,223V235M255.5,220V248M257.5,227V250M259.5,225V245M261.5,229V242M263.5,224V239M265.5,220V230M267.5,216V230M269.5,219V234M271.5,223V231M273.5,219V239M275.5,214V228M277.5,210V228M279.5,219V229M281.5,217V230M283.5,216V231M285.5,217V230M287.5,217V231M289.5,197V222M291.5,204V223M293.5,208V219M295.5,208V224M297.5,206V223M299.5,207V234M301.5,208V227M303.5,208V228M305.5,208V229M307.5,221V233M309.5,227V255M311.5,239V256M313.5,238V266M315.5,234V260M317.5,232V244M319.5,231V240M321.5,218V237M323.5,212V226M325.5,214V225M327.5,204V225M329.5,208V225M331.5,210V224M333.5,221V228M335.5,218V225M337.5,214V225M339.5,216V225M341.5,211V225M343.5,211V224M345.5,209V221M347.5,208V218M349.5,200V213M351.5,179V205M353.5,187V196M355.5,185V194M357.5,188V195M359.5,172V194M361.5,170V201M363.5,187V256M365.5,223V258M367.5,230V260M369.5,230V256M371.5,237V258M373.5,240V264M375.5,252V271M377.5,251V271M379.5,254V266M381.5,258V267M383.5,263V271M385.5,248V263M387.5,232V263M389.5,220V244M391.5,227V247M393.5,236V251M395.5,234V266M397.5,261V268M399.5,168V268M401.5,132V182M403.5,146V173M405.5,165V175M407.5,165V196M409.5,189V205M411.5,186V216M413.5,192V215M415.5,186V206M417.5,186V203M419.5,186V204M421.5,193V203M423.5,194V216M425.5,208V234M427.5,206V225M429.5,211V229M431.5,204V225M433.5,207V228M435.5,222V251M437.5,251V290M439.5,265V281M441.5,256V284M443.5,255V268M445.5,246V276M447.5,226V246M449.5,222V243M451.5,224V238M453.5,232V244M455.5,236V263M457.5,234V255M459.5,239V254M461.5,241V249M463.5,233V247M465.5,230V246M467.5,218V234M469.5,218V233M471.5,226V241M473.5,237V247M475.5,244V257M477.5,239V251M479.5,242V257M481.5,241V254M483.5,253V264M485.5,257V270M487.5,265V281M489.5,273V281" stroke="#00ff00" stroke-width="1" fill="none" shape-rendering="crispEdges"/>
<line x1="218" y1="308" x2="618" y2="220" stroke="#9966cc" stroke-width="5"/>
<line x1="233" y1="300" x2="596" y2="299" stroke="#ff9900" stroke-width="5.5" stroke-linecap="round"/>
<g filter="url(#sh)"><line x1="400" y1="138" x2="490.6" y2="283.1" stroke="#cc0000" stroke-width="3"/><polygon points="498,295 484.6,286.8 496.5,279.4" fill="#cc0000"/></g>
<g filter="url(#sh)"><line x1="503" y1="289" x2="536.5" y2="272.3" stroke="#cc0000" stroke-width="3"/><polygon points="549,266 539.6,278.5 533.3,266.0" fill="#cc0000"/></g>
<g filter="url(#sh)"><line x1="556" y1="271" x2="585.7" y2="447.2" stroke="#cc0000" stroke-width="3"/><polygon points="588,461 578.8,448.4 592.6,446.0" fill="#cc0000"/></g>
<polygon points="241.5,268.5 245.0,265 253.5,265 253.5,274 251.0,276.5 250.5,270 244.5,276 241.5,273 247.5,268" fill="#ff0000"/>
<polygon points="53,438.5 56.5,435 65,435 65,444 62.5,446.5 62,440 56,446 53,443 59,438" fill="#ff0000"/>
<polygon points="431,141.5 434.5,145 443,145 443,136 440.5,133.5 440,140 434,134 431,137 437,142" fill="#ff0000"/>
<polygon points="484,106 494,106 489,111" fill="#8899aa"/>
<polygon points="14,113 22,113 18,117.5" fill="#ffffff"/>
<text x="26.5" y="117.5" fill="#ffffff" stroke="#ffffff" stroke-width="0.2" font-size="9.5" textLength="61" lengthAdjust="spacingAndGlyphs" >AUDUSD,M15</text>
<text x="94" y="117.5" fill="#ffffff" stroke="#ffffff" stroke-width="0.2" font-size="9.5" textLength="141" lengthAdjust="spacingAndGlyphs" >0.94348 0.94352 0.94332 0.94346</text>
<polyline points="10.8,676.0 25.8,668.3 46.4,661.9 59.3,661.9 72.2,669.6 85.1,674.8 100.6,678.6 108.3,670.9 116.0,669.6 123.8,673.0 144.4,675.5 170.2,678.1 177.9,670.9 193.4,670.4 205.0,675.5 214.0,663.1 226.9,655.9 234.7,655.4 250.1,659.3 260.4,663.1 275.9,679.9 283.7,676.6 299.1,676.0 314.6,681.2 330.0,679.1 345.5,676.0 360.9,670.9 381.6,678.1 397.0,676.0 404.8,670.9 415.1,668.8 428.0,664.4 443.5,673.5 464.1,679.9 479.6,673.5 488.6,673.0" fill="none" stroke="#ffff00" stroke-width="1" stroke-linejoin="round" />
<polyline points="10.8,683.8 23.2,676.0 36.1,667.0 51.6,661.1 61.9,658.5 77.4,660.6 89.0,661.1 101.9,665.2 108.3,655.4 114.8,652.8 123.8,659.3 136.7,666.2 154.7,667.0 170.2,667.8 185.7,669.6 203.7,674.8 211.5,658.0 221.8,642.5 237.2,636.1 250.1,635.3 260.4,632.7 273.3,633.5 291.4,637.4 306.9,643.8 317.2,651.5 330.0,653.3 345.5,656.7 358.4,654.9 366.1,659.3 381.6,670.4 395.8,672.2 404.8,664.4 417.7,661.9 433.1,665.7 443.5,674.2 458.9,676.0 474.4,673.5 489.9,678.1" fill="none" stroke="#008000" stroke-width="2.5" stroke-linejoin="round" />
<polyline points="10.8,685.0 15.5,678.6 20.6,661.9 25.8,655.4 30.9,643.8 34.8,645.1 45.1,636.1 52.9,642.5 56.7,642.0 61.1,635.3 64.5,640.0 68.3,655.4 73.5,662.6 77.4,662.6 80.0,661.9 83.8,667.0 89.0,668.3 92.8,673.5 96.7,676.0 100.6,681.2 103.1,670.9 105.7,645.1 109.6,611.6 113.5,619.3 117.3,647.7 121.2,673.5 125.1,679.9 131.5,685.1 136.7,685.1 141.8,673.5 147.0,673.5 154.7,673.5 161.2,673.5 167.6,673.5 171.5,676.0 177.9,669.6 183.1,670.9 189.5,674.8 193.4,674.8 198.6,682.5 203.7,690.2 206.3,683.8 210.2,619.3 213.5,577.5 219.2,585.8 224.3,600.0 232.1,609.0 237.2,609.0 247.5,624.5 255.3,614.2 263.0,628.3 268.2,634.8 273.3,647.7 278.5,649.0 286.2,652.8 292.7,651.5 299.1,658.0 306.9,664.4 314.6,683.8 322.3,670.9 330.0,665.7 337.7,670.9 348.0,667.0 355.8,654.1 362.2,652.8 364.8,663.1 367.4,683.8 373.8,689.0 384.2,696.7 391.9,679.9 397.0,686.4 400.9,668.3 405.3,633.5 412.5,659.3 420.3,655.4 428.0,667.0 435.7,673.5 442.2,700.5 449.9,678.6 457.6,686.4 464.1,685.8 474.4,673.5 478.3,681.2 484.7,682.5 489.4,691.0" fill="none" stroke="#ff0000" stroke-width="2" stroke-linejoin="round" />
<rect x="672" y="107" width="599" height="618" fill="#ffffff" />
<rect x="674" y="109" width="557" height="1" fill="#000000" />
<rect x="674" y="109" width="1" height="383" fill="#000000" />
<rect x="1230" y="109" width="1" height="383" fill="#000000" />
<rect x="674" y="491" width="557" height="1" fill="#000000" />
<rect x="674" y="493" width="557" height="1" fill="#000000" />
<rect x="674" y="493" width="1" height="106" fill="#000000" />
<rect x="1230" y="493" width="1" height="106" fill="#000000" />
<rect x="674" y="598" width="557" height="1" fill="#000000" />
<rect x="674" y="601" width="557" height="1" fill="#000000" />
<rect x="674" y="601" width="1" height="107" fill="#000000" />
<rect x="1230" y="601" width="1" height="107" fill="#000000" />
<rect x="674" y="707" width="557" height="1" fill="#000000" />
<line x1="701.5" y1="110" x2="701.5" y2="491" stroke="#000000" stroke-width="1" stroke-dasharray="3,2" shape-rendering="crispEdges"/>
<line x1="701.5" y1="494" x2="701.5" y2="598" stroke="#000000" stroke-width="1" stroke-dasharray="3,2" shape-rendering="crispEdges"/>
<line x1="701.5" y1="602" x2="701.5" y2="707" stroke="#000000" stroke-width="1" stroke-dasharray="3,2" shape-rendering="crispEdges"/>
<line x1="749.5" y1="110" x2="749.5" y2="491" stroke="#000000" stroke-width="1" stroke-dasharray="3,2" shape-rendering="crispEdges"/>
<line x1="749.5" y1="494" x2="749.5" y2="598" stroke="#000000" stroke-width="1" stroke-dasharray="3,2" shape-rendering="crispEdges"/>
<line x1="749.5" y1="602" x2="749.5" y2="707" stroke="#000000" stroke-width="1" stroke-dasharray="3,2" shape-rendering="crispEdges"/>
<line x1="797.5" y1="110" x2="797.5" y2="491" stroke="#000000" stroke-width="1" stroke-dasharray="3,2" shape-rendering="crispEdges"/>
<line x1="797.5" y1="494" x2="797.5" y2="598" stroke="#000000" stroke-width="1" stroke-dasharray="3,2" shape-rendering="crispEdges"/>
<line x1="797.5" y1="602" x2="797.5" y2="707" stroke="#000000" stroke-width="1" stroke-dasharray="3,2" shape-rendering="crispEdges"/>
<line x1="845.5" y1="110" x2="845.5" y2="491" stroke="#000000" stroke-width="1" stroke-dasharray="3,2" shape-rendering="crispEdges"/>
<line x1="845.5" y1="494" x2="845.5" y2="598" stroke="#000000" stroke-width="1" stroke-dasharray="3,2" shape-rendering="crispEdges"/>
<line x1="845.5" y1="602" x2="845.5" y2="707" stroke="#000000" stroke-width="1" stroke-dasharray="3,2" shape-rendering="crispEdges"/>
<line x1="893.5" y1="110" x2="893.5" y2="491" stroke="#000000" stroke-width="1" stroke-dasharray="3,2" shape-rendering="crispEdges"/>
<line x1="893.5" y1="494" x2="893.5" y2="598" stroke="#000000" stroke-width="1" stroke-dasharray="3,2" shape-rendering="crispEdges"/>
<line x1="893.5" y1="602" x2="893.5" y2="707" stroke="#000000" stroke-width="1" stroke-dasharray="3,2" shape-rendering="crispEdges"/>
<line x1="941.5" y1="110" x2="941.5" y2="491" stroke="#000000" stroke-width="1" stroke-dasharray="3,2" shape-rendering="crispEdges"/>
<line x1="941.5" y1="494" x2="941.5" y2="598" stroke="#000000" stroke-width="1" stroke-dasharray="3,2" shape-rendering="crispEdges"/>
<line x1="941.5" y1="602" x2="941.5" y2="707" stroke="#000000" stroke-width="1" stroke-dasharray="3,2" shape-rendering="crispEdges"/>
<line x1="989.5" y1="110" x2="989.5" y2="491" stroke="#000000" stroke-width="1" stroke-dasharray="3,2" shape-rendering="crispEdges"/>
<line x1="989.5" y1="494" x2="989.5" y2="598" stroke="#000000" stroke-width="1" stroke-dasharray="3,2" shape-rendering="crispEdges"/>
<line x1="989.5" y1="602" x2="989.5" y2="707" stroke="#000000" stroke-width="1" stroke-dasharray="3,2" shape-rendering="crispEdges"/>
<line x1="1037.5" y1="110" x2="1037.5" y2="491" stroke="#000000" stroke-width="1" stroke-dasharray="3,2" shape-rendering="crispEdges"/>
<line x1="1037.5" y1="494" x2="1037.5" y2="598" stroke="#000000" stroke-width="1" stroke-dasharray="3,2" shape-rendering="crispEdges"/>
<line x1="1037.5" y1="602" x2="1037.5" y2="707" stroke="#000000" stroke-width="1" stroke-dasharray="3,2" shape-rendering="crispEdges"/>
<line x1="1085.5" y1="110" x2="1085.5" y2="491" stroke="#000000" stroke-width="1" stroke-dasharray="3,2" shape-rendering="crispEdges"/>
<line x1="1085.5" y1="494" x2="1085.5" y2="598" stroke="#000000" stroke-width="1" stroke-dasharray="3,2" shape-rendering="crispEdges"/>
<line x1="1085.5" y1="602" x2="1085.5" y2="707" stroke="#000000" stroke-width="1" stroke-dasharray="3,2" shape-rendering="crispEdges"/>
<line x1="1133.5" y1="110" x2="1133.5" y2="491" stroke="#000000" stroke-width="1" stroke-dasharray="3,2" shape-rendering="crispEdges"/>
<line x1="1133.5" y1="494" x2="1133.5" y2="598" stroke="#000000" stroke-width="1" stroke-dasharray="3,2" shape-rendering="crispEdges"/>
<line x1="1133.5" y1="602" x2="1133.5" y2="707" stroke="#000000" stroke-width="1" stroke-dasharray="3,2" shape-rendering="crispEdges"/>
<rect x="1231" y="119" width="3" height="1" fill="#000000" />
<text x="1236" y="123" fill="#000000" font-size="9.5" textLength="33" lengthAdjust="spacingAndGlyphs" >0.94740</text>
<rect x="1231" y="153" width="3" height="1" fill="#000000" />
<text x="1236" y="157" fill="#000000" font-size="9.5" textLength="33" lengthAdjust="spacingAndGlyphs" >0.94605</text>
<rect x="1231" y="186" width="3" height="1" fill="#000000" />
<text x="1236" y="190" fill="#000000" font-size="9.5" textLength="33" lengthAdjust="spacingAndGlyphs" >0.94470</text>
<rect x="1231" y="252" width="3" height="1" fill="#000000" />
<text x="1236" y="256" fill="#000000" font-size="9.5" textLength="33" lengthAdjust="spacingAndGlyphs" >0.94205</text>
<rect x="1231" y="286" width="3" height="1" fill="#000000" />
<text x="1236" y="290" fill="#000000" font-size="9.5" textLength="33" lengthAdjust="spacingAndGlyphs" >0.94070</text>
<rect x="1231" y="320" width="3" height="1" fill="#000000" />
<text x="1236" y="324" fill="#000000" font-size="9.5" textLength="33" lengthAdjust="spacingAndGlyphs" >0.93935</text>
<rect x="1231" y="353" width="3" height="1" fill="#000000" />
<text x="1236" y="357" fill="#000000" font-size="9.5" textLength="33" lengthAdjust="spacingAndGlyphs" >0.93800</text>
<rect x="1231" y="387" width="3" height="1" fill="#000000" />
<text x="1236" y="391" fill="#000000" font-size="9.5" textLength="33" lengthAdjust="spacingAndGlyphs" >0.93665</text>
<rect x="1231" y="421" width="3" height="1" fill="#000000" />
<text x="1236" y="425" fill="#000000" font-size="9.5" textLength="33" lengthAdjust="spacingAndGlyphs" >0.93530</text>
<rect x="1231" y="454" width="3" height="1" fill="#000000" />
<text x="1236" y="458" fill="#000000" font-size="9.5" textLength="33" lengthAdjust="spacingAndGlyphs" >0.93395</text>
<rect x="1231" y="488" width="3" height="1" fill="#000000" />
<text x="1236" y="492" fill="#000000" font-size="9.5" textLength="33" lengthAdjust="spacingAndGlyphs" >0.93260</text>
<rect x="1231" y="212" width="39" height="11" fill="#000000" />
<text x="1236" y="221" fill="#ffffff" stroke="#ffffff" stroke-width="0.2" font-size="9.5" textLength="33" lengthAdjust="spacingAndGlyphs" >0.94346</text>
<rect x="675" y="218" width="555" height="1" fill="#778899" />
<rect x="675" y="708" width="1" height="4" fill="#000000" />
<text x="674" y="720" fill="#000000" font-size="9.5" textLength="47" lengthAdjust="spacingAndGlyphs" >11 Jul 2014</text>
<rect x="739" y="708" width="1" height="4" fill="#000000" />
<text x="738" y="720" fill="#000000" font-size="9.5" textLength="49" lengthAdjust="spacingAndGlyphs" >14 Jul 19:00</text>
<rect x="803" y="708" width="1" height="4" fill="#000000" />
<text x="802" y="720" fill="#000000" font-size="9.5" textLength="49" lengthAdjust="spacingAndGlyphs" >16 Jul 03:00</text>
<rect x="867" y="708" width="1" height="4" fill="#000000" />
<text x="866" y="720" fill="#000000" font-size="9.5" textLength="49" lengthAdjust="spacingAndGlyphs" >17 Jul 11:00</text>
<rect x="931" y="708" width="1" height="4" fill="#000000" />
<text x="930" y="720" fill="#000000" font-size="9.5" textLength="49" lengthAdjust="spacingAndGlyphs" >18 Jul 19:00</text>
<rect x="995" y="708" width="1" height="4" fill="#000000" />
<text x="994" y="720" fill="#000000" font-size="9.5" textLength="49" lengthAdjust="spacingAndGlyphs" >22 Jul 03:00</text>
<rect x="1059" y="708" width="1" height="4" fill="#000000" />
<text x="1058" y="720" fill="#000000" font-size="9.5" textLength="49" lengthAdjust="spacingAndGlyphs" >23 Jul 11:00</text>
<polygon points="1110,110 1121,110 1115.5,115" fill="#8899aa"/>
<polygon points="678,116 686,116 682,120.5" fill="#000000"/>
<text x="691" y="121" fill="#000000" font-size="9.5" textLength="55" lengthAdjust="spacingAndGlyphs" >AUDUSD,H1</text>
<text x="752" y="121" fill="#000000" font-size="9.5" textLength="141" lengthAdjust="spacingAndGlyphs" >0.94399 0.94409 0.94315 0.94346</text>
<path d="M675.5,291V323M677.5,302V321M679.5,300V317M681.5,298V307M683.5,293V318M685.5,284V306M687.5,293V367M689.5,346V365M691.5,343V358M693.5,341V354M695.5,334V348M697.5,328V343M699.5,323V337M701.5,332V363M703.5,336V357M705.5,332V351M707.5,315V333M709.5,302V332M711.5,302V316M713.5,304V319M715.5,310V323M717.5,297V318M719.5,297V325M721.5,307V326M723.5,313V328M725.5,315V333M727.5,309V322M729.5,298V319M731.5,297V318M733.5,312V334M735.5,316V325M737.5,317V333M739.5,326V339M741.5,327V339M743.5,327V332M745.5,314V328M747.5,314V327M749.5,316V328M751.5,316V327M753.5,316V325M755.5,317V340M757.5,302V347M759.5,313V324M761.5,312V319M763.5,310V321M765.5,316V344M767.5,336V390M769.5,374V393M771.5,369V390M773.5,376V406M775.5,372V399M777.5,364V380M779.5,357V385M781.5,355V377M783.5,308V432M785.5,368V415M787.5,384V401M789.5,378V394M791.5,364V389M793.5,361V381M795.5,364V406M797.5,372V408M799.5,368V399M801.5,376V413M803.5,394V415M805.5,394V418M807.5,376V464M809.5,444V465M811.5,445V475M813.5,453V480M815.5,442V473M817.5,418V452M819.5,424V456M821.5,430V445M823.5,426V439M825.5,425V437M827.5,416V449M829.5,400V421M831.5,388V415M833.5,392V406M835.5,388V403M837.5,392V402M839.5,389V405M841.5,388V401M843.5,384V390M845.5,385V412M847.5,388V394M849.5,379V394M851.5,382V401M853.5,395V423M855.5,395V412M857.5,402V418M859.5,382V418M861.5,350V386M863.5,362V382M865.5,368V390M867.5,361V389M869.5,361V380M871.5,361V388M873.5,359V377M875.5,329V379M877.5,326V358M879.5,343V379M881.5,354V385M883.5,356V381M885.5,345V366M887.5,348V365M889.5,359V421M891.5,405V451M893.5,426V456M895.5,432V462M897.5,431V464M899.5,434V460M901.5,418V460M903.5,396V433M905.5,387V407M907.5,395V408M909.5,387V403M911.5,370V388M913.5,329V388M915.5,336V349M917.5,335V361M919.5,336V358M921.5,332V348M923.5,281V345M925.5,341V392M927.5,340V375M929.5,337V356M931.5,328V349M933.5,310V338M935.5,306V327M937.5,307V326M939.5,309V367M941.5,302V329M943.5,307V325M945.5,305V322M947.5,312V342M949.5,334V344M951.5,324V342M953.5,316V336M955.5,309V330M957.5,319V333M959.5,321V344M961.5,312V344M963.5,333V355M965.5,341V369M967.5,347V362M969.5,349V378M971.5,344V360M973.5,347V367M975.5,351V378M977.5,364V376M979.5,365V374M981.5,359V372M983.5,352V371M985.5,354V372M987.5,361V397M989.5,363V399M991.5,371V394M993.5,381V395M995.5,375V398M997.5,362V395M999.5,355V366M1001.5,318V371M1003.5,328V354M1005.5,324V341M1007.5,302V336M1009.5,323V342M1011.5,329V343M1013.5,319V339M1015.5,324V340M1017.5,330V347M1019.5,249V355M1021.5,252V304M1023.5,289V336M1025.5,324V342M1027.5,328V343M1029.5,313V337M1031.5,317V329M1033.5,318V331M1035.5,315V325M1037.5,315V328M1039.5,317V332M1041.5,319V336M1043.5,332V354M1045.5,209V351M1047.5,212V231M1049.5,215V241M1051.5,218V233M1053.5,213V229M1055.5,202V229M1057.5,184V212M1059.5,183V201M1061.5,181V195M1063.5,177V190M1065.5,169V190M1067.5,174V183M1069.5,175V200M1071.5,184V213M1073.5,182V199M1075.5,174V189M1077.5,177V188M1079.5,177V188M1081.5,158V184M1083.5,152V172M1085.5,163V208M1087.5,194V215M1089.5,201V219M1091.5,184V210M1093.5,128V216M1095.5,138V210M1097.5,162V182M1099.5,163V193M1101.5,174V189M1103.5,186V228M1105.5,184V209M1107.5,184V212M1109.5,187V205M1111.5,182V213M1113.5,195V209M1115.5,204V227" stroke="#00ff00" stroke-width="1" fill="none" shape-rendering="crispEdges"/>
<line x1="900" y1="465" x2="1198" y2="262" stroke="#9966cc" stroke-width="5"/>
<text x="680" y="506" fill="#000000" font-size="9.5" textLength="83" lengthAdjust="spacingAndGlyphs" >AO_Zotik -0.000429</text>
<line x1="675" y1="552.5" x2="1230" y2="552.5" stroke="#c0c0c0" stroke-width="1" stroke-dasharray="4,3" shape-rendering="crispEdges"/>
<rect x="1231" y="500" width="3" height="1" fill="#000000" />
<text x="1234" y="504" fill="#000000" font-size="9.5" textLength="38" lengthAdjust="spacingAndGlyphs" >0.004797</text>
<rect x="1231" y="552" width="3" height="1" fill="#000000" />
<text x="1234" y="556" fill="#000000" font-size="9.5" textLength="19" lengthAdjust="spacingAndGlyphs" >0.00</text>
<rect x="1231" y="593" width="3" height="1" fill="#000000" />
<text x="1234" y="597" fill="#000000" font-size="9.5" textLength="38" lengthAdjust="spacingAndGlyphs" >-0.00390</text>
<polyline points="674.5,549.2 682.6,545.6 688.0,545.6 705.9,551.9 723.9,551.0 763.4,551.0 774.2,557.3 795.8,556.9 813.8,558.5 826.3,555.5 835.3,550.0 849.7,547.4 864.1,544.7 874.9,543.3 887.4,548.0 890.0,551.9 900.8,557.3 915.2,552.8 927.7,551.9 943.9,546.5 958.3,545.6 969.1,552.8 979.8,558.2 996.0,559.0 1008.6,553.7 1023.0,548.3 1042.7,547.4 1055.3,542.9 1073.3,543.8 1087.7,546.5 1096.6,548.3 1114.6,559.0" fill="none" stroke="#000000" stroke-width="1" stroke-linejoin="round" />
<polyline points="674.5,552.8 684.4,550.0 691.6,552.8 705.9,553.7 718.5,550.6 734.7,550.0 763.4,551.0 774.2,557.8 786.8,560.9 801.2,562.3 813.8,568.6 826.3,568.6 846.1,560.3 858.7,557.3 878.4,550.0 887.4,549.2 900.8,558.2 908.0,556.4 920.5,548.3 929.5,546.8 945.7,541.1 960.1,542.0 974.5,546.5 996.0,553.7 1015.8,547.4 1023.0,544.7 1042.7,545.6 1055.3,534.8 1067.9,526.4 1082.3,524.6 1091.3,527.6 1098.4,527.1 1115.5,534.8" fill="none" stroke="#008000" stroke-width="2.5" stroke-linejoin="round" />
<polyline points="674.5,550.0 679.0,541.0 685.3,534.8 688.0,539.3 692.5,557.3 697.0,554.6 701.4,553.7 705.0,559.0 711.3,544.7 715.8,543.8 722.1,544.3 725.7,549.2 731.1,547.4 734.7,549.2 741.0,554.6 745.5,553.7 750.9,549.2 758.0,551.9 763.4,550.0 767.9,559.0 772.4,578.8 777.8,577.9 782.3,569.0 788.6,574.3 794.0,567.2 799.4,568.0 804.8,571.6 810.2,582.4 813.8,593.2 821.0,577.0 826.3,569.8 833.5,550.0 840.7,547.4 846.1,544.7 852.4,543.8 856.9,551.0 864.1,537.5 867.7,534.8 874.0,533.9 878.4,528.5 882.9,538.4 888.3,540.2 890.0,542.9 892.7,564.5 897.2,578.8 900.8,578.8 906.2,560.9 911.6,542.9 917.0,533.0 921.4,532.1 923.2,528.5 929.5,541.1 936.7,526.7 941.2,529.4 945.7,526.7 951.1,535.7 957.4,533.5 961.9,539.3 967.3,557.3 974.5,559.0 979.8,564.5 987.0,563.6 995.1,570.7 997.8,569.8 1005.0,548.3 1010.4,542.0 1015.8,542.9 1023.0,527.6 1028.4,542.9 1037.3,540.2 1042.7,543.8 1046.3,533.9 1049.9,503.4 1057.1,503.4 1062.5,499.8 1069.7,504.3 1073.3,514.5 1084.1,514.5 1091.3,535.7 1097.5,525.8 1105.6,550.0 1114.6,557.3" fill="none" stroke="#ff0000" stroke-width="2" stroke-linejoin="round" />
<text x="679" y="614" fill="#000000" font-size="9.5" textLength="161" lengthAdjust="spacingAndGlyphs" >WPR_VSmark(21|55|77|277) -25.6537</text>
<line x1="675" y1="623.5" x2="1230" y2="623.5" stroke="#000000" stroke-width="1" stroke-dasharray="8,5" shape-rendering="crispEdges"/>
<line x1="675" y1="654.5" x2="1230" y2="654.5" stroke="#000000" stroke-width="1" stroke-dasharray="8,5" shape-rendering="crispEdges"/>
<line x1="675" y1="686.5" x2="1230" y2="686.5" stroke="#000000" stroke-width="1" stroke-dasharray="8,5" shape-rendering="crispEdges"/>
<rect x="1231" y="608" width="3" height="1" fill="#000000" />
<text x="1234" y="612" fill="#000000" font-size="9.5" textLength="6" lengthAdjust="spacingAndGlyphs" >0</text>
<rect x="1231" y="623" width="3" height="1" fill="#000000" />
<text x="1234" y="627" fill="#000000" font-size="9.5" textLength="16.5" lengthAdjust="spacingAndGlyphs" >-20</text>
<rect x="1231" y="654" width="3" height="1" fill="#000000" />
<text x="1234" y="658" fill="#000000" font-size="9.5" textLength="16.5" lengthAdjust="spacingAndGlyphs" >-50</text>
<rect x="1231" y="686" width="3" height="1" fill="#000000" />
<text x="1234" y="690" fill="#000000" font-size="9.5" textLength="16.5" lengthAdjust="spacingAndGlyphs" >-80</text>
<rect x="1231" y="700" width="3" height="1" fill="#000000" />
<text x="1234" y="704" fill="#000000" font-size="9.5" textLength="22.0" lengthAdjust="spacingAndGlyphs" >-100</text>
<polyline points="675.6,624.8 677.5,629.9 680.0,619.0 683.0,612.4 684.4,612.4 685.8,623.3 686.6,642.3 687.3,691.8 688.3,686.0 689.5,691.1 691.0,686.0 692.4,691.8 693.9,678.7 696.0,664.1 697.5,660.5 699.0,665.6 700.4,675.8 701.9,681.6 703.3,686.0 704.4,678.7 705.5,685.3 707.0,662.7 708.4,642.3 709.9,631.3 712.1,635.0 713.5,646.6 715.7,635.7 717.9,629.9 719.4,634.3 720.8,648.1 722.3,653.9 723.7,642.3 725.9,630.6 728.1,621.9 729.6,614.6 731.0,621.9 732.5,635.0 734.0,643.7 735.4,638.6 736.9,643.7 739.0,659.8 740.5,655.4 742.0,658.3 743.4,653.9 744.9,640.8 746.3,651.0 747.8,659.8 749.3,665.6 750.7,653.9 752.2,670.0 753.6,686.0 755.1,699.1 756.5,680.2 758.0,648.1 759.5,643.0 761.6,645.2 763.1,651.0 764.6,664.1 766.0,681.6 767.5,700.6 769.0,696.2 770.0,687.5 771.5,693.3 773.6,699.1 775.1,675.8 778.0,671.4 781.7,666.3 783.8,674.3 786.8,670.7 789.7,669.2 791.1,659.8 793.3,664.1 795.5,681.6 797.0,665.6 799.2,659.0 801.3,677.3 802.8,683.1 805.0,681.6 806.4,693.3 808.6,697.7 810.8,700.6 813.7,690.4 815.9,680.2 817.4,675.1 819.6,683.8 821.7,677.3 823.9,675.8 826.1,661.2 828.3,646.6 830.5,637.9 832.0,635.0 833.4,636.4 835.6,629.2 838.5,627.7 840.7,621.9 842.9,612.4 844.3,616.0 845.8,623.3 848.0,617.5 850.2,619.0 853.1,626.2 856.0,640.8 857.5,646.6 859.7,617.5 861.8,621.9 864.0,632.1 866.9,621.9 868.0,624.8 870.9,634.3 873.1,636.4 874.6,614.6 875.6,607.3 876.7,619.0 878.2,640.8 879.7,649.6 881.1,658.3 882.6,639.4 884.8,631.3 887.0,635.0 888.4,661.2 889.9,687.5 891.3,706.4 893.5,690.4 895.7,696.2 898.6,690.4 900.8,675.8 903.0,661.2 905.2,658.3 907.4,659.8 909.5,648.1 911.7,635.0 913.9,619.0 916.1,623.3 918.3,632.1 920.5,617.5 922.7,629.2 924.9,646.6 927.0,639.4 930.0,632.1 932.9,624.1 935.1,619.0 937.2,627.0 939.4,629.2 941.6,624.1 943.8,629.2 946.7,640.8 949.6,652.5 954.0,638.6 957.6,646.6 959.8,648.1 962.8,668.5 964.9,670.0 966.0,670.0 967.5,683.1 969.6,670.0 971.8,672.9 974.0,690.4 975.5,700.6 977.7,688.9 979.8,693.3 981.3,697.7 983.5,677.3 985.7,691.8 987.9,705.0 989.3,681.6 991.5,690.4 993.7,700.6 996.6,675.8 998.8,656.9 1001.7,636.4 1003.2,619.0 1005.4,621.9 1007.5,608.7 1009.0,629.2 1011.2,639.4 1013.4,631.3 1016.3,636.4 1018.5,629.2 1020.7,620.4 1022.9,643.7 1027.2,651.0 1033.1,653.9 1037.4,655.4 1040.3,665.6 1042.5,686.0 1043.3,697.7 1044.7,665.6 1045.4,607.3 1047.6,608.7 1049.8,616.0 1052.0,607.3 1054.9,610.2 1057.8,605.8 1062.2,606.6 1066.2,606.6 1069.2,611.7 1071.3,624.1 1072.8,613.1 1075.7,608.0 1077.9,612.4 1080.8,605.8 1083.7,611.7 1085.2,629.2 1086.6,661.2 1087.4,674.3 1091.0,659.8 1092.5,629.2 1093.6,612.4 1095.4,636.4 1098.3,648.1 1100.5,668.5 1103.4,691.8 1105.6,662.7 1107.8,674.3 1110.0,670.0 1112.9,683.1 1115.5,696.9" fill="none" stroke="#ff0000" stroke-width="1" stroke-linejoin="round" />
<polyline points="675.6,668.5 679.3,664.1 683.7,661.2 685.8,664.1 687.3,681.6 688.8,684.5 691.0,683.8 693.1,681.6 696.8,675.1 699.7,677.3 701.9,683.1 704.1,681.6 707.0,670.0 709.9,666.3 714.3,669.2 718.6,664.9 722.3,653.9 723.7,636.4 725.9,631.3 728.1,623.3 729.6,620.4 731.8,629.2 734.0,636.4 736.1,635.0 738.3,645.2 740.5,646.6 743.4,643.7 745.6,635.7 747.1,648.1 749.3,651.0 751.4,646.6 752.9,656.9 755.1,667.1 757.3,655.4 759.5,643.7 761.6,643.0 763.8,648.1 765.3,670.0 766.8,699.1 768.2,705.0 770.0,690.4 772.9,696.2 774.4,683.1 777.3,675.8 780.9,672.9 784.6,672.2 789.0,670.0 791.1,662.7 794.0,671.4 796.2,681.6 798.4,662.7 800.6,671.4 802.8,684.5 805.7,686.0 807.9,699.1 811.5,700.6 815.2,688.9 817.4,678.7 820.3,686.0 823.2,680.2 825.4,680.2 828.3,671.4 832.0,661.2 834.9,659.0 838.5,658.3 842.9,652.5 845.8,658.3 848.0,655.4 851.6,659.8 857.5,665.6 859.7,655.4 861.1,640.8 863.3,646.6 866.9,640.8 868.0,639.4 873.8,636.4 875.3,624.8 878.2,636.4 881.1,643.7 884.0,630.6 886.2,630.6 888.4,643.7 890.6,678.7 892.8,680.9 895.0,686.0 897.2,680.2 899.3,684.5 901.5,664.1 903.7,652.5 905.9,655.4 908.8,651.0 911.7,629.2 913.9,616.8 916.1,617.5 918.3,620.4 919.7,613.1 921.9,621.9 925.6,651.0 928.5,636.4 932.1,626.2 935.1,617.5 938.0,626.2 940.9,620.4 943.8,621.1 948.9,635.0 954.0,623.3 958.4,627.7 962.8,639.4 966.0,645.2 970.4,643.7 974.7,653.9 977.7,651.0 980.6,652.5 983.5,645.2 986.4,658.3 989.3,655.4 993.0,667.1 996.6,649.6 1000.3,642.3 1003.2,630.6 1006.8,627.7 1009.7,635.0 1012.6,633.5 1016.3,646.6 1018.5,632.1 1019.6,613.8 1021.4,630.6 1022.9,651.0 1025.8,661.2 1028.7,655.4 1033.1,651.0 1037.4,651.0 1040.3,658.3 1043.3,667.1 1044.7,643.7 1045.9,608.7 1049.1,611.7 1052.0,608.7 1056.4,605.8 1066.2,606.6 1069.9,614.6 1071.3,617.5 1074.3,608.0 1077.9,608.7 1082.3,605.8 1085.2,619.0 1087.4,626.2 1090.3,621.9 1093.2,608.7 1096.1,614.6 1099.8,620.4 1103.4,629.2 1107.1,627.7 1111.4,635.0 1115.5,643.7" fill="none" stroke="#1e90ff" stroke-width="1" stroke-linejoin="round" />
<polyline points="675.6,668.5 679.3,664.1 683.7,661.2 685.8,664.1 687.3,681.6 688.8,684.5 691.0,683.8 693.1,681.6 696.8,675.1 699.7,677.3 701.9,683.1 704.1,681.6 707.0,670.0 709.9,666.3 714.3,669.2 718.6,664.9 722.3,670.0 725.9,668.5 729.6,666.3 733.2,671.4 737.6,674.3 740.5,675.8 744.9,670.0 749.3,671.4 753.6,672.2 758.0,670.0 762.4,668.5 765.3,675.8 766.8,693.3 768.2,702.0 770.0,694.8 772.9,699.1 775.1,681.6 778.0,678.0 783.1,675.8 789.0,672.9 791.1,665.6 794.8,672.9 796.2,683.1 799.2,667.1 801.3,677.3 803.5,686.0 807.2,702.0 810.8,700.6 814.5,690.4 817.4,681.6 820.3,687.5 823.2,683.1 826.1,681.6 829.0,672.9 832.7,662.7 836.3,661.2 840.0,658.3 842.9,654.7 845.8,659.8 848.7,656.9 853.1,662.7 857.5,667.1 860.4,643.7 863.3,648.8 867.7,642.3 868.0,643.7 873.1,645.2 875.3,627.7 878.9,643.7 881.1,646.6 884.8,632.1 887.0,634.3 889.1,658.3 891.3,686.0 893.5,684.5 896.4,688.9 899.3,687.5 901.5,668.5 904.4,661.2 908.1,658.3 911.0,639.4 913.9,624.8 916.8,629.2 919.0,620.4 921.9,629.2 924.9,648.1 929.2,636.4 935.1,617.5 939.4,627.0 942.3,619.7 945.3,623.3 948.9,635.0 954.0,624.1 959.1,627.0 962.8,638.6 966.0,643.7 970.4,642.3 975.5,653.9 977.7,650.3 980.6,653.2 983.5,645.9 987.1,664.1 989.3,658.3 993.0,667.1 997.3,648.1 1001.0,642.3 1003.9,630.6 1007.5,627.7 1009.7,633.5 1013.4,629.9 1016.3,635.0 1018.5,616.0 1019.6,607.3 1021.4,620.4 1024.3,645.2 1028.7,640.8 1033.1,636.4 1037.4,638.6 1041.8,645.2 1043.3,642.3 1045.4,606.6 1049.8,610.9 1053.5,606.6 1059.3,605.1 1066.2,605.8 1070.6,617.5 1074.3,607.3 1082.3,605.1 1085.9,624.8 1087.4,627.7 1090.3,622.6 1093.2,608.0 1095.4,613.1 1099.8,617.5 1103.4,635.0 1107.1,625.5 1111.4,630.6 1115.5,636.4" fill="none" stroke="#9932cc" stroke-width="1" stroke-linejoin="round" />
<polyline points="675.6,667.1 679.3,666.3 682.2,664.1 685.1,662.7 686.6,675.8 692.4,675.8 697.5,671.4 701.2,675.1 706.3,674.3 709.2,665.6 712.1,666.3 714.3,668.5 718.6,664.9 721.6,667.8 725.9,667.1 730.3,666.3 733.2,669.2 737.6,671.4 742.0,670.7 744.9,668.5 749.3,669.2 755.1,671.4 759.5,667.8 763.8,668.5 766.0,684.5 770.0,683.8 772.9,686.7 775.1,681.6 778.0,680.2 780.9,684.5 783.8,683.1 786.8,681.6 790.4,682.4 793.3,680.9 795.5,687.5 798.4,682.4 801.3,687.5 805.0,688.2 807.2,699.9 809.4,700.6 812.3,702.8 815.2,699.1 818.1,696.9 822.5,695.5 826.9,692.6 831.2,687.5 837.1,686.7 842.9,685.3 848.7,686.0 853.1,686.7 856.7,689.7 858.9,686.0 861.1,679.4 866.2,680.2 868.0,678.7 873.1,679.4 875.3,671.4 878.2,674.3 881.1,675.8 883.3,668.5 887.0,668.5 889.1,681.6 889.9,693.3 892.8,694.8 895.7,696.9 899.3,699.1 900.8,687.5 903.7,680.2 908.1,678.7 911.7,672.2 913.9,662.7 917.6,664.1 919.7,661.2 923.4,661.2 925.6,670.0 929.2,662.7 932.1,658.3 935.1,650.3 938.0,655.4 941.6,650.3 945.3,653.9 948.2,659.8 952.5,653.9 957.6,655.4 961.3,662.7 964.9,665.6 966.0,665.6 971.1,663.4 974.7,670.7 977.7,668.5 980.6,669.2 983.5,667.1 987.1,677.3 989.3,672.9 993.0,678.0 995.9,675.8 998.1,667.1 1002.4,659.8 1006.8,655.4 1009.7,658.3 1012.6,656.1 1017.0,657.6 1018.5,633.5 1020.7,636.4 1022.1,651.0 1025.0,659.0 1027.2,658.3 1030.1,653.9 1037.4,653.9 1041.1,657.6 1043.3,661.2 1044.7,621.9 1047.6,621.9 1053.5,621.1 1055.7,614.6 1059.3,608.7 1066.2,605.8 1069.2,610.9 1071.3,616.0 1074.3,607.3 1077.2,610.2 1081.5,605.1 1083.7,607.3 1085.9,621.9 1090.3,619.0 1093.2,606.6 1096.9,614.6 1102.7,625.5 1104.9,620.4 1108.5,622.6 1112.2,623.3 1115.5,629.2" fill="none" stroke="#000000" stroke-width="2.2" stroke-linejoin="round" />
<g filter="url(#sh)"><line x1="1058" y1="470" x2="1143.7" y2="541.7" stroke="#b00000" stroke-width="3.2"/><polygon points="1156,552 1138.9,547.5 1148.5,536.0" fill="#b00000"/></g>
</svg></body></html>
